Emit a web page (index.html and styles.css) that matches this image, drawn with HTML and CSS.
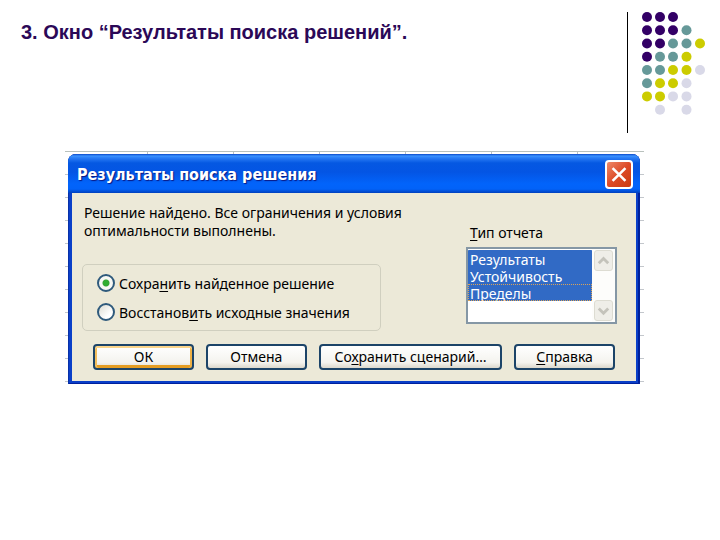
FILE: index.html
```
<!DOCTYPE html>
<html lang="ru">
<head>
  <meta charset="UTF-8">
  <meta name="viewport" content="width=device-width, initial-scale=1.0">
  <title>Окно “Результаты поиска решений”</title>
  <link rel="stylesheet" href="styles.css">
</head>
<body>
  <header class="slide-header">
    <h1>3. Окно “Результаты поиска решений”.</h1>
    <div class="decor">
      <svg class="dots" viewBox="0 0 66 106" aria-hidden="true">
        <g fill="#330066">
          <circle cx="6" cy="6" r="5"/><circle cx="19" cy="6" r="5"/><circle cx="32" cy="6" r="5"/>
          <circle cx="6" cy="19.3" r="5"/><circle cx="19" cy="19.3" r="5"/><circle cx="32" cy="19.3" r="5"/>
          <circle cx="6" cy="32.5" r="5"/><circle cx="19" cy="32.5" r="5"/>
          <circle cx="6" cy="45.7" r="5"/>
        </g>
        <g fill="#669999">
          <circle cx="45.5" cy="19.3" r="5"/>
          <circle cx="32" cy="32.5" r="5"/><circle cx="45.5" cy="32.5" r="5"/>
          <circle cx="19" cy="45.7" r="5"/><circle cx="32" cy="45.7" r="5"/>
          <circle cx="6" cy="59" r="5"/><circle cx="19" cy="59" r="5"/>
          <circle cx="6" cy="72.2" r="5"/>
        </g>
        <g fill="#cccc00">
          <circle cx="59" cy="32.5" r="5"/>
          <circle cx="45.5" cy="45.7" r="5"/>
          <circle cx="32" cy="59" r="5"/><circle cx="45.5" cy="59" r="5"/>
          <circle cx="19" cy="72.2" r="5"/><circle cx="32" cy="72.2" r="5"/>
          <circle cx="6" cy="85.4" r="5"/><circle cx="19" cy="85.4" r="5"/>
        </g>
        <g fill="#d9d9e8">
          <circle cx="59" cy="59" r="5"/>
          <circle cx="45.5" cy="72.2" r="5"/>
          <circle cx="32" cy="85.4" r="5"/><circle cx="45.5" cy="85.4" r="5"/>
          <circle cx="19" cy="98.8" r="5"/><circle cx="45.5" cy="98.8" r="5"/>
        </g>
      </svg>
    </div>
  </header>

  <main class="sheet">
    <form class="dialog">
      <div class="titlebar">
        <h2>Результаты поиска решения</h2>
        <button type="button" class="close-btn" aria-label="Закрыть">
          <svg viewBox="0 0 28 28"><path d="M6.500 6.500L21.500 21.500M21.500 6.500L6.500 21.500" stroke="#fff" stroke-width="3" fill="none"/></svg>
        </button>
      </div>

      <div class="dialog-body">
        <div class="columns">
          <div class="left">
            <p class="message">Решение найдено. Все ограничения и условия оптимальности выполнены.</p>
            <div class="group" role="radiogroup">
              <label class="option"><input type="radio" name="solution" checked><span>Сохра<u>н</u>ить найденное решение</span></label>
              <label class="option"><input type="radio" name="solution"><span>Восстанов<u>и</u>ть исходные значения</span></label>
            </div>
          </div>
          <div class="right">
            <label for="report"><u>Т</u>ип отчета</label>
            <div class="listbox">
              <select id="report" class="report-list" multiple size="4">
                <option selected>Результаты</option>
                <option selected>Устойчивость</option>
                <option class="current" selected>Пределы</option>
              </select>
              <div class="scrollbar">
                <button type="button" class="scroll-btn" aria-label="Вверх">
                  <svg viewBox="0 0 18 20"><path d="M4 13L9 8L14 13" stroke="#c4c3bb" stroke-width="3" fill="none"/></svg>
                </button>
                <button type="button" class="scroll-btn" aria-label="Вниз">
                  <svg viewBox="0 0 18 20"><path d="M4 8L9 13L14 8" stroke="#c4c3bb" stroke-width="3" fill="none"/></svg>
                </button>
              </div>
            </div>
          </div>
        </div>

        <div class="buttons">
          <button type="submit" class="btn btn-default">ОК</button>
          <button type="button" class="btn">Отмена</button>
          <button type="button" class="btn btn-wide">Со<u>х</u>ранить сценарий…</button>
          <button type="button" class="btn"><u>С</u>правка</button>
        </div>
      </div>
    </form>
  </main>
</body>
</html>
```
FILE: styles.css
```
* {
  box-sizing: border-box;
}
body {
  margin: 0;
  background: #fff;
  color: #000;
  font-family: "Noto Sans", "Open Sans", sans-serif;
  font-size: 14px;
}
.slide-header {
  display: flex;
  justify-content: space-between;
  padding: 12px 13px 0 21px;
}
.slide-header h1 {
  margin: 8px 0 0;
  color: #2b0857;
  font: bold 20px/24px "Liberation Sans", Arial, sans-serif;
}
.decor {
  height: 121px;
  padding-left: 13px;
  border-left: 1px solid #000;
}
.dots {
  display: block;
  width: 66px;
  height: 106px;
  margin-top: -1px;
}

/* spreadsheet grid that shows round the dialog */
.sheet {
  margin: 18px 76px 0 65px;
  padding: 2px 4px 0 3px;
  border-top: 1px solid #b9c1bd;
  background:
    repeating-linear-gradient(to right, transparent 0 82px, #b9bfc4 82px 83px, transparent 83px 86px),
    repeating-linear-gradient(to bottom, transparent 0 22px, #c3c7cc 22px 23px);
}
.dialog {
  padding: 0 4px 3px;
  background: #0a3fc8;
  border-radius: 8px 8px 0 0;
  box-shadow: inset 1px 0 #0831a8, inset -2px -1px #00209c;
}
.titlebar {
  display: flex;
  align-items: center;
  justify-content: space-between;
  height: 39px;
  margin: 0 -4px;
  padding: 2px 7px 0 9px;
  border-radius: 8px 8px 0 0;
  background: linear-gradient(#0a48c8 0, #3b93ff 2px, #2a7cf5 4px, #0558e2 9px, #0455e4 18px, #0264fb 30px, #0262f8 35px, #0040bd 39px);
}
.titlebar h2 {
  margin: 0;
  color: #fff;
  font: bold 16px/24px "DejaVu Sans Condensed", "DejaVu Sans", sans-serif;
  text-shadow: 1px 1px 1px #0a1883;
}
.close-btn {
  width: 28px;
  height: 29px;
  padding: 0;
  border: 2px solid #fff;
  border-radius: 4px;
  background: linear-gradient(135deg, #ee8a6a, #dd4a26 50%, #c93a10);
}
.close-btn svg {
  display: block;
  width: 100%;
  height: 100%;
}
.dialog-body {
  padding: 11px 19px 11px 10px;
  background: #ece9d8;
}
.columns {
  display: flex;
  justify-content: space-between;
}
.left {
  width: 320px;
}
.message {
  margin: 0 0 24px 2px;
  line-height: 18px;
}
.group {
  display: flex;
  flex-direction: column;
  gap: 9px;
  width: 299px;
  padding: 8px 14px;
  border: 1px solid #d0cfbf;
  border-radius: 5px;
}
.option {
  display: flex;
  align-items: center;
  gap: 4px;
  height: 20px;
  white-space: nowrap;
}
.option input {
  appearance: none;
  flex: none;
  width: 18px;
  height: 18px;
  margin: 0;
  border: 2px solid #2f5a7c;
  border-radius: 50%;
  background: linear-gradient(135deg, #dddcd2, #fff 70%);
}
.option input:checked {
  background: radial-gradient(circle, #2fae2f 0 2px, #35a335 3px, #f8f8f4 4px);
}
u {
  text-underline-offset: 2px;
}
.right {
  width: 151px;
  padding-top: 19px;
}
.right label {
  display: block;
  padding-left: 4px;
  line-height: 20px;
}
.listbox {
  display: flex;
  height: 77px;
  margin-top: 4px;
  border: 2px solid #8597a5;
  background: #fff;
}
.report-list {
  flex: 1;
  min-width: 0;
  margin: 0;
  padding: 1px 0;
  border: 0;
  outline: 0;
  overflow: hidden;
  background: #fff;
  font: inherit;
}
.report-list option {
  height: 17px;
  min-height: 17px;
  padding: 0 2px;
  line-height: 17px;
}
.report-list option:checked {
  background: linear-gradient(#316ac5, #316ac5);
  -webkit-text-fill-color: #fff;
}
.report-list .current {
  outline: 1px dotted #d9a35a;
  outline-offset: -1px;
}
.scrollbar {
  display: flex;
  flex-direction: column;
  justify-content: space-between;
  width: 23px;
  padding: 1px 2px;
  background: #fdfdfb;
}
.scroll-btn {
  height: 21px;
  padding: 0;
  border: 1px solid #dddcd2;
  border-radius: 3px;
  background: #efeee8;
}
.scroll-btn svg {
  display: block;
  width: 100%;
  height: 100%;
}
.buttons {
  display: flex;
  gap: 12px;
  margin: 13px 2px 0 11px;
}
.btn {
  flex: 100 1 0;
  height: 26px;
  padding: 0;
  border: 2px solid #1c4468;
  border-radius: 4px;
  background: linear-gradient(#fff, #f4f3ee 75%, #dcd8cc);
  color: #000;
  font: inherit;
  line-height: 20px;
  white-space: nowrap;
}
.btn-wide {
  flex-grow: 185;
}
.btn-default {
  box-shadow: inset 0 2px #fbd58b, inset 2px 0 #f2bd5c, inset -2px 0 #eeb044, inset 0 -3px #e59d22;
}
```
